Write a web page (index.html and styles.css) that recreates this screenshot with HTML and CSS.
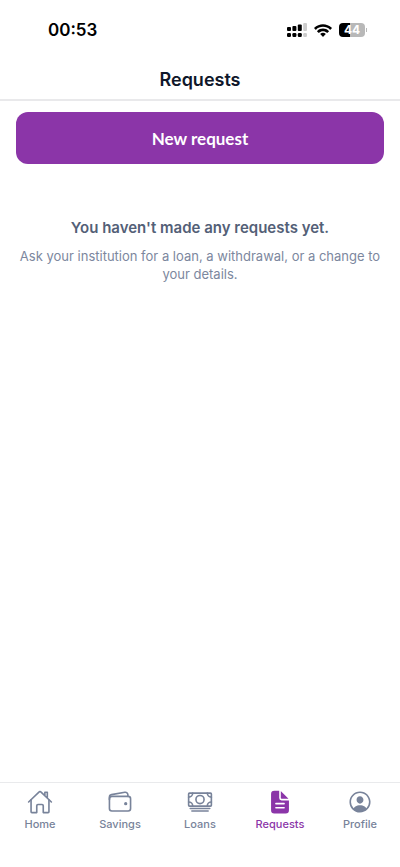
FILE: index.html
```html
<!DOCTYPE html>
<html lang="en">
<head>
<meta charset="utf-8">
<meta name="viewport" content="width=device-width, initial-scale=1">
<title>Requests</title>
<link rel="stylesheet" href="styles.css">
</head>
<body>
<div class="app">
  <div class="status">
    <span class="clock">00:53</span>
    <div class="indicators">
      <svg class="signal" viewBox="0 0 20 14" aria-hidden="true">
        <g fill="#000"><rect x="0" y="4" width="4" height="4" rx="1"/><rect x="5.4" y="3" width="4" height="5" rx="1"/><rect x="10.8" y="1.5" width="4" height="6.5" rx="1"/><rect x="0" y="10" width="4" height="4" rx="1.2"/><rect x="5.4" y="10" width="4" height="4" rx="1.2"/><rect x="10.8" y="10" width="4" height="4" rx="1.2"/></g>
        <g fill="#ccc"><rect x="16.2" y="0" width="3.8" height="8" rx="1"/><rect x="16.2" y="10" width="3.8" height="4" rx="1.2"/></g>
      </svg>
      <svg class="wifi" viewBox="0.5 0 16 11.5" aria-hidden="true">
        <path d="M8.500 2.500c2.400 0 4.600.9 6.200 2.500.1.1.3.1.4 0l1.200-1.200c.2-.2.2-.4 0-.5C12-.9 5-.9.7 3.300c-.1.1-.1.4 0 .5L1.900 5c.1.1.3.1.4 0C3.900 3.400 6.100 2.500 8.500 2.500zm0 3.900c1.300 0 2.600.5 3.500 1.400.1.1.3.1.5 0l1.200-1.200c.1-.2.1-.4 0-.5-2.900-2.700-7.500-2.700-10.400 0-.1.1-.1.3 0 .5l1.200 1.200c.2.1.4.1.5 0 .9-.9 2.200-1.400 3.500-1.400zm2.300 2.700c.1-.1.1-.4 0-.5-1.300-1.100-3.300-1.100-4.600 0-.1.1-.1.4 0 .5l2.100 2.100c.1.1.3.1.4 0z"/>
      </svg>
      <div class="battery"><span class="level">44</span><span class="tip"></span></div>
    </div>
  </div>
  <header class="header"><h1>Requests</h1></header>
  <main class="content">
    <button class="primary" type="button">New request</button>
    <section class="empty">
      <h2>You haven't made any requests yet.</h2>
      <p>Ask your institution for a loan, a withdrawal, or a change to your details.</p>
    </section>
  </main>
  <nav class="tabs" aria-label="Main">
    <a class="tab" href="#home">
      <svg class="icon line" viewBox="0 0 512 512" aria-hidden="true"><path d="M80 212v236a16 16 0 0016 16h96V328a24 24 0 0124-24h80a24 24 0 0124 24v136h96a16 16 0 0016-16V212"/><path d="M480 256L266.890 52c-5-5.280-16.690-5.340-21.780 0L32 256M400 179V64h-48v69"/></svg>
      <span>Home</span>
    </a>
    <a class="tab" href="#savings">
      <svg class="icon line" viewBox="0 0 512 512" aria-hidden="true"><rect x="48" y="144" width="416" height="288" rx="48"/><path d="M411.360 144v-30A50 50 0 00352 64.900L88.640 109.850A50 50 0 0048 159v49"/><circle class="dot" cx="368" cy="288" r="32"/></svg>
      <span>Savings</span>
    </a>
    <a class="tab" href="#loans">
      <svg class="icon line" viewBox="0 0 512 512" aria-hidden="true"><rect x="32" y="80" width="448" height="256" rx="16"/><path d="M64 384h384M96 432h320"/><circle cx="256" cy="208" r="80"/><path d="M480 160a80 80 0 01-80-80M32 160a80 80 0 0080-80M480 256a80 80 0 00-80 80M32 256a80 80 0 0180 80"/></svg>
      <span>Loans</span>
    </a>
    <a class="tab active" href="#requests" aria-current="page">
      <svg class="icon" viewBox="0 0 512 512" aria-hidden="true"><path d="M428 224H288a48 48 0 01-48-48V36a4 4 0 00-4-4h-92a64 64 0 00-64 64v320a64 64 0 0064 64h224a64 64 0 0064-64V228a4 4 0 00-4-4zm-92 160H176a16 16 0 010-32h160a16 16 0 010 32zm0-80H176a16 16 0 010-32h160a16 16 0 010 32z"/><path d="M419.220 188.590L275.410 44.780a2 2 0 00-3.410 1.410V176a16 16 0 0016 16h129.810a2 2 0 001.410-3.410z"/></svg>
      <span>Requests</span>
    </a>
    <a class="tab" href="#profile">
      <svg class="icon" viewBox="0 0 512 512" aria-hidden="true"><path d="M258.900 48C141.920 46.420 46.420 141.920 48 258.900c1.560 112.190 92.910 203.540 205.100 205.100 117 1.600 212.480-93.900 210.880-210.880C462.440 140.910 371.090 49.560 258.900 48zm126.420 327.250a4 4 0 01-6.140-.320 124.270 124.270 0 00-32.350-29.590C321.370 329 289.110 320 256 320s-65.370 9-90.830 25.340a124.240 124.240 0 00-32.350 29.580 4 4 0 01-6.140.320A175.320 175.320 0 0180 259c-1.630-97.310 78.220-178.760 175.570-179S432 158.810 432 256a175.320 175.320 0 01-46.680 119.250z"/><path d="M256 144c-19.720 0-37.550 7.390-50.220 20.820s-19 32-17.570 51.930C191.110 256 221.520 288 256 288s64.830-32 67.790-71.240c1.480-19.740-4.800-38.140-17.680-51.820C293.390 151.440 275.590 144 256 144z"/></svg>
      <span>Profile</span>
    </a>
  </nav>
</div>
</body>
</html>
```
FILE: styles.css
```css
* {
  box-sizing: border-box;
}

body {
  margin: 0;
  background: #fff;
  font-family: Inter, "Liberation Sans", sans-serif;
}

h1,
h2,
p {
  margin: 0;
}

.app {
  display: flex;
  flex-direction: column;
  min-height: 100vh;
}

.status {
  display: flex;
  justify-content: space-between;
  align-items: center;
  height: 60px;
  padding: 0 33px 0 48px;
}

.clock {
  font-size: 17px;
  font-weight: 600;
}

.indicators {
  display: flex;
  align-items: center;
  gap: 7px;
}

.signal {
  width: 20px;
  height: 14px;
}

.wifi {
  width: 18px;
  height: 13px;
}

.battery {
  display: flex;
  align-items: center;
  gap: 1px;
}

.level {
  width: 26px;
  border-radius: 4px;
  background: linear-gradient(90deg, #000 44%, #b8b8b8 44%);
  color: #fff;
  font-size: 12px;
  font-weight: 700;
  line-height: 14px;
  text-align: center;
}

.tip {
  width: 1px;
  height: 4px;
  background: #b8b8b8;
}

.header {
  height: 41px;
  border-bottom: 2px solid #e9e9eb;
  text-align: center;
}

.header h1 {
  color: #0f172a;
  font-size: 18px;
  font-weight: 600;
  line-height: 40px;
}

.content {
  flex: 1;
  padding: 11px 16px;
}

.primary {
  display: block;
  width: 100%;
  height: 52px;
  border: 0;
  border-radius: 12px;
  background: #8b35a8;
  color: #fff;
  font-family: Lato, sans-serif;
  font-size: 17px;
  font-weight: 700;
}

.empty {
  padding-top: 52px;
  text-align: center;
}

.empty h2 {
  color: #536077;
  font-size: 15px;
  font-weight: 600;
  line-height: 24px;
}

.empty p {
  margin-top: 7px;
  color: #7c879e;
  font-size: 13px;
  line-height: 18px;
}

.tabs {
  display: grid;
  grid-template-columns: repeat(5, 1fr);
  height: 85px;
  padding-top: 6px;
  border-top: 1px solid #e9eaec;
}

.tab {
  display: flex;
  flex-direction: column;
  align-items: center;
  gap: 2px;
  color: #78839a;
  font-size: 11px;
  font-weight: 500;
  line-height: 14px;
  text-decoration: none;
}

.active {
  color: #8b35a8;
}

.icon {
  width: 26px;
  height: 26px;
  fill: currentColor;
}

.line {
  fill: none;
  stroke: currentColor;
  stroke-width: 32;
  stroke-linecap: round;
  stroke-linejoin: round;
}

.dot {
  fill: currentColor;
  stroke: none;
}
```
